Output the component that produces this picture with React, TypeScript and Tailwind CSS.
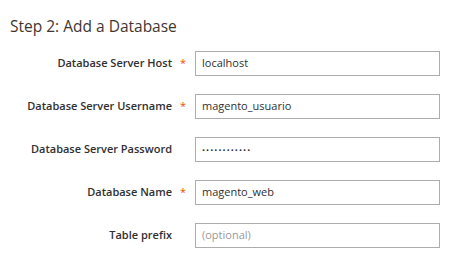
import React from "react";

type Field = { label: string; value?: string; placeholder?: string; required?: boolean; password?: boolean };

const FIELDS: Field[] = [
  { label: "Database Server Host", value: "localhost", required: true },
  { label: "Database Server Username", value: "magento_usuario", required: true },
  { label: "Database Server Password", value: "••••••••••••", password: true },
  { label: "Database Name", value: "magento_web", required: true },
  { label: "Table prefix", placeholder: "(optional)" },
];

function Row({ field }: { field: Field }) {
  return (
    <div className="flex h-[25px] items-center">
      <div className="w-[172px] text-right text-[11px] font-semibold text-[#303030]">{field.label}</div>
      <div className="w-[23px] pl-[8px] text-[11px] text-[#eb5202]">{field.required ? "*" : ""}</div>
      <div className="flex h-[25px] w-[245px] items-center border border-[#adadad] bg-white px-[6px] text-[11px]">
        {field.value ? (
          <span className={field.password ? "text-[8px] tracking-[1.1px] text-[#303030]" : "text-[#303030]"}>{field.value}</span>
        ) : (
          <span className="text-[#9a9a9a]">{field.placeholder}</span>
        )}
      </div>
    </div>
  );
}

export default function App() {
  return (
    <div className="h-[260px] w-[451px] bg-white font-['Open_Sans',sans-serif]">
      <h2 className="pl-[10px] pt-[16px] text-[15.5px] leading-[20px] text-[#41362f]">Step 2: Add a Database</h2>
      <div className="mt-[15px] flex flex-col gap-[18px]">
        {FIELDS.map((f) => (
          <Row key={f.label} field={f} />
        ))}
      </div>
    </div>
  );
}
